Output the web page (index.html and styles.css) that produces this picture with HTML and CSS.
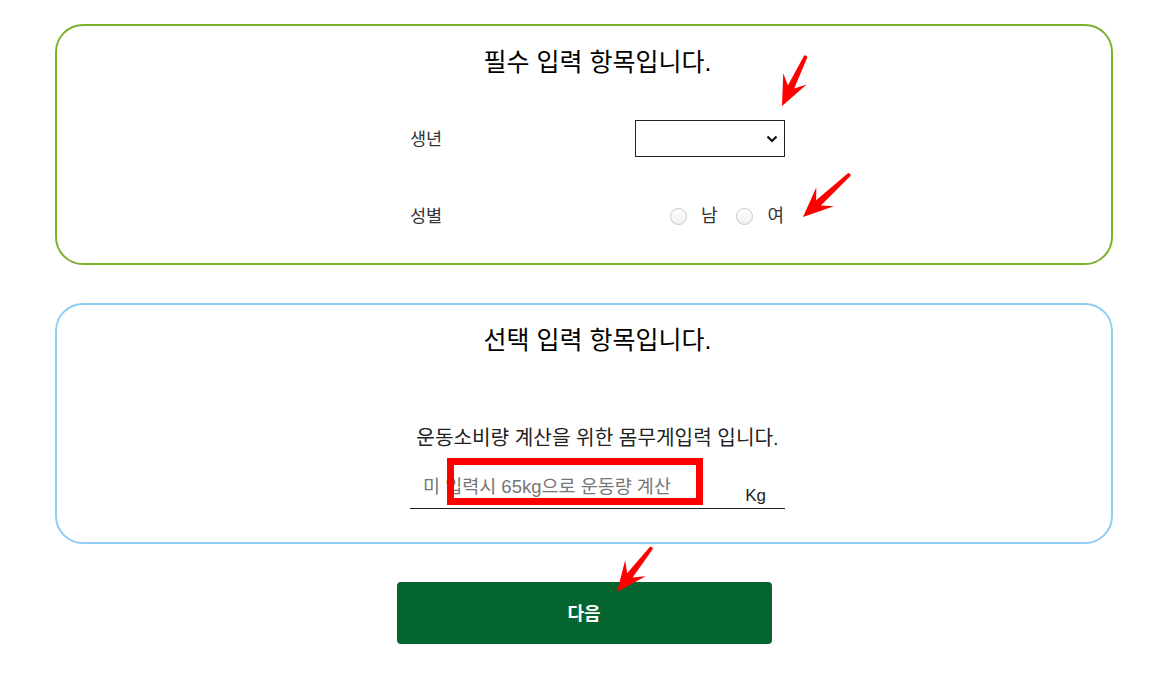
FILE: index.html
```html
<!DOCTYPE html>
<html lang="ko">
<head>
<meta charset="utf-8">
<title>입력</title>
<link rel="stylesheet" href="styles.css">
</head>
<body>
<div class="page">
  <section class="card card-required">
    <h2 class="card-title">필수 입력 항목입니다.</h2>
    <div class="form-block">
      <div class="row row-birth">
        <span class="label">생년</span>
        <div class="select-wrap">
          <select class="select"><option></option></select>
          <svg class="chevron" width="12" height="8" viewBox="0 0 12 8"><path d="M1.5 1.5 L6 6 L10.5 1.5" fill="none" stroke="#111" stroke-width="2.2"/></svg>
        </div>
      </div>
      <div class="row row-gender">
        <span class="label">성별</span>
        <div class="radios">
          <label class="radio"><input type="radio" name="g"><span>남</span></label>
          <label class="radio"><input type="radio" name="g"><span>여</span></label>
        </div>
      </div>
    </div>
  </section>

  <section class="card card-optional">
    <h2 class="card-title">선택 입력 항목입니다.</h2>
    <div class="form-block">
      <p class="desc">운동소비량 계산을 위한 몸무게입력 입니다.</p>
      <div class="weight">
        <input class="weight-input" type="text" placeholder="미 입력시 65kg으로 운동량 계산">
        <span class="unit">Kg</span>
      </div>
    </div>
  </section>

  <button class="next" type="button">다음</button>
</div>

<svg class="marks" width="1173" height="688" viewBox="0 0 1173 688">
  <g fill="#ff0000">
    <polygon transform="translate(782,106) rotate(-64.4)" points="0,0 30,-13 21,-3.5 55,-1.8 56,0 55,1.8 21,3.5 30,13"/>
    <polygon transform="translate(803,217) rotate(-42.5)" points="0,0 30,-13 21,-3.5 63,-1.8 64,0 63,1.8 21,3.5 30,13"/>
    <polygon transform="translate(617,592) rotate(-52.1)" points="0,0 30,-13 21,-3.5 56,-1.8 57,0 56,1.8 21,3.5 30,13"/>
  </g>
  <rect x="450.5" y="461.5" width="249" height="40" fill="none" stroke="#ff0000" stroke-width="7"/>
</svg>
</body>
</html>
```
FILE: styles.css
```css
* { box-sizing: border-box; }

html, body {
  margin: 0;
  padding: 0;
  background: #ffffff;
}

body {
  font-family: "Liberation Sans", "Noto Sans CJK KR", sans-serif;
  color: #222;
  position: relative;
  width: 1173px;
  height: 688px;
  overflow: hidden;
}

.page {
  width: 1058px;
  margin-left: 55px;
  padding-top: 24px;
  display: flex;
  flex-direction: column;
}

.card {
  height: 241px;
  border: 2px solid #7db12d;
  border-radius: 28px;
  padding-left: 27px;
  display: flex;
  flex-direction: column;
  align-items: center;
}

.card-required {
  padding-top: 21px;
}

.card-optional {
  margin-top: 38px;
  border-color: #8fcff5;
  padding-top: 20px;
}

.card-title {
  margin: 0;
  font-size: 25px;
  font-weight: normal;
  line-height: 30px;
  color: #000;
}

.form-block {
  width: 375px;
  display: flex;
  flex-direction: column;
}

.row {
  display: flex;
  align-items: center;
  justify-content: space-between;
  height: 37px;
}

.row-birth { margin-top: 43px; }
.row-gender { margin-top: 40px; }

.label {
  font-size: 17.5px;
  color: #333;
  line-height: 20px;
}

.select-wrap {
  position: relative;
  width: 150px;
  height: 37px;
}

.select {
  appearance: none;
  -webkit-appearance: none;
  width: 150px;
  height: 37px;
  border: 1px solid #222;
  border-radius: 0;
  background: #fff;
  margin: 0;
  padding: 0 8px;
  font-size: 16px;
}

.chevron {
  position: absolute;
  right: 7px;
  top: 15px;
}

.radios {
  display: flex;
  align-items: center;
  margin-right: 1px;
}

.radio {
  display: flex;
  align-items: center;
  font-size: 18px;
  color: #333;
  line-height: 20px;
}

.radio + .radio { margin-left: 19px; }

.radio input {
  appearance: none;
  -webkit-appearance: none;
  width: 17px;
  height: 17px;
  margin: 2px 14px 0 0;
  border: 1px solid #c8c8c8;
  border-radius: 50%;
  background: linear-gradient(#ffffff, #f0f0f0);
}

.desc {
  margin: 71px 0 0;
  text-align: center;
  font-size: 20.2px;
  line-height: 24px;
  color: #222;
  width: 420px;
  align-self: center;
}

.weight {
  margin-top: 16px;
  height: 43px;
  border-bottom: 1px solid #222;
  display: flex;
  align-items: flex-end;
}

.weight-input {
  flex: 1;
  min-width: 0;
  height: 42px;
  border: none;
  outline: none;
  padding: 0 0 0 13px;
  margin: 0;
  background: transparent;
  font-family: "Liberation Sans", "Noto Sans CJK KR", sans-serif;
  font-size: 18.5px;
  color: #222;
}

.weight-input::placeholder {
  color: #767676;
}

.unit {
  font-size: 17px;
  line-height: 20px;
  padding-bottom: 2px;
  margin-right: 19px;
  color: #222;
}

.next {
  margin: 38px auto 0;
  width: 375px;
  height: 62px;
  border: none;
  border-radius: 4px;
  background: #05652f;
  color: #fff;
  font-family: "Liberation Sans", "Noto Sans CJK KR", sans-serif;
  font-size: 18px;
  font-weight: bold;
  padding: 0 0 2px;
}

.marks {
  position: absolute;
  left: 0;
  top: 0;
  pointer-events: none;
}
```
